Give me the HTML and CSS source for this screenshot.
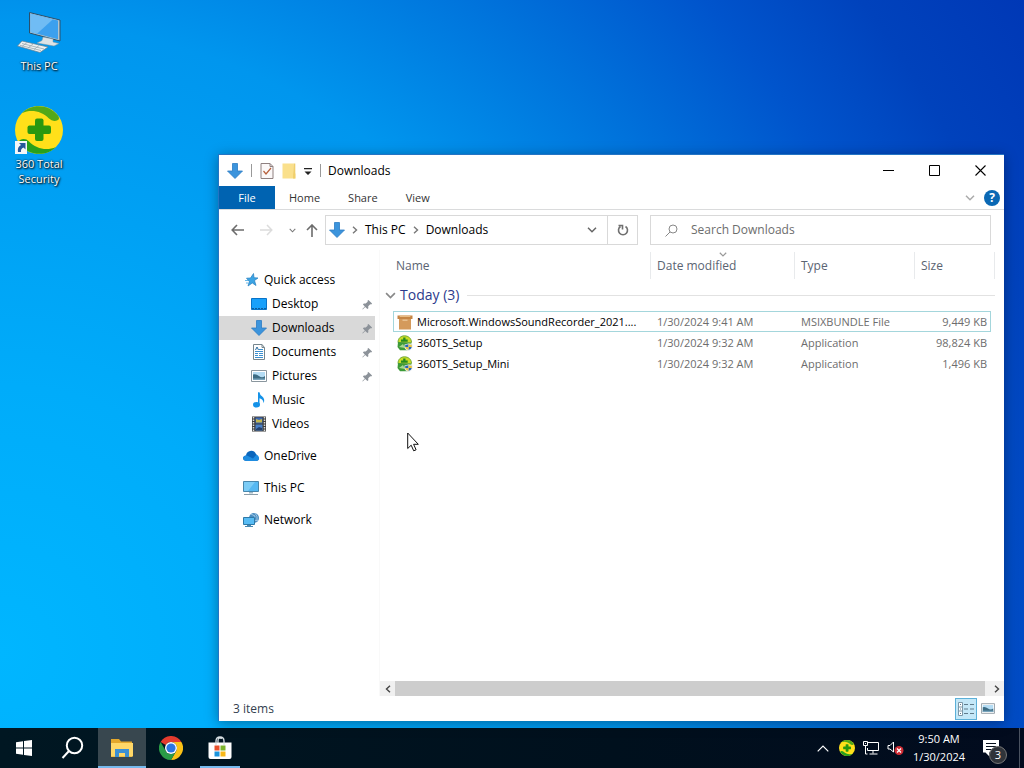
FILE: index.html
```html
<!DOCTYPE html>
<html lang="en">
<head>
    <meta charset="UTF-8">
    <meta name="viewport" content="width=device-width, initial-scale=1.0">
    <title>Downloads</title>
    <link rel="stylesheet" href="styles.css">
</head>
<body>
    <!-- Icons used more than once -->
    <svg class="icon-defs" width="0" height="0">
        <symbol id="icon-down" viewBox="0 0 16 16">
            <path d="M5.500.5h5v7.500h5L8 15.500.5 8h5z" fill="#3c94dc" stroke="#2b7cc4" stroke-width=".8"/>
        </symbol>
        <symbol id="icon-pin" viewBox="0 0 12 12">
            <path d="M7 1l4 4-1 1-1-.2-2.200 2.200.1 2-1 1-2.400-2.300L.8 11.400l-.4-.4 2.700-2.900L1 6l1-1h2L6.200 3 6 2z" fill="#8c9299"/>
        </symbol>
        <symbol id="icon-360" viewBox="0 0 48 48">
            <circle cx="24" cy="24" r="24" fill="#ffe01a"/>
            <path d="M7 7C17-3 34-2 43 9.500q2 3 0 4.500-5 2.500-9-1.500C27 5 16 3 7 7z" fill="#52a818"/>
            <path d="M41 41C31 51 14 50 5 38.500q-2-3 0-4.500 5-2.500 9 1.500C21 43 32 45 41 41z" fill="#28a01c"/>
            <rect x="20" y="12.500" width="8.500" height="22.500" rx="2" fill="#28980f"/>
            <rect x="12.500" y="19.500" width="23.500" height="8.500" rx="2" fill="#28980f"/>
        </symbol>
        <symbol id="icon-setup" viewBox="0 0 16 16">
            <path d="M1 7.500C1 3 4 .8 7.500.8S14.500 3 14.500 7.500z" fill="#c8dc28" stroke="#5a9c28" stroke-width=".8"/>
            <path d="M6.200 2.500h2.300v2h2.200v2.300H4V4.500h2.200z" fill="#258a20"/>
            <path d="M1 7l5 .5 8.500 1v4.500l-4 2.200H3L.5 12z" fill="#3c9a38"/>
            <path d="M2 12l4-3 2 4z" fill="#a8d890"/>
            <path d="M11.500 8.500l4 1v2.500q0 2.500-4 4-4-1.500-4-4V9.500z" fill="#e8ecef"/>
            <path d="M11.500 9.300V12H8.200V10zM11.500 12h3.300q-.2 2-3.300 3z" fill="#2864b4"/>
            <path d="M11.500 9.300V12h3.300V10zM11.500 12H8.200q.2 2 3.300 3z" fill="#e8c43c"/>
        </symbol>
        <symbol id="icon-chevron-down" viewBox="0 0 10 6">
            <path d="M1 .8l4 4 4-4" fill="none" stroke="currentColor" stroke-width="1.500"/>
        </symbol>
        <symbol id="icon-chevron-right" viewBox="0 0 6 8">
            <path d="M1 .8L4.500 4 1 7.200" fill="none" stroke="currentColor" stroke-width="1.400"/>
        </symbol>
        <symbol id="icon-picture" viewBox="0 0 16 12">
            <path d="M.5.5h15v11H.5z" fill="#fff" stroke="#8a969e"/>
            <path d="M2 2h12v8H2z" fill="#b4dcf4"/>
            <path d="M2 4.500q3-1 6 1.500t6 0v4H2z" fill="#3c6c84"/>
            <path d="M2 8.500h12V10H2z" fill="#78a4bc"/>
        </symbol>
    </svg>

    <main class="desktop">
        <div class="shortcuts">
            <button class="shortcut">
                <svg width="48" height="48" viewBox="0 0 48 48">
                    <path d="M14.500 4.500L45 12v21L14.500 25z" fill="#b4c4cc" stroke="#28506e"/>
                    <path d="M15.500 5.800L43 12.500v18.800L15.500 24z" fill="#3ca0ee"/>
                    <path d="M15.500 5.800L38 11.300 22 25.700l-6.500-1.700z" fill="#70bcf4"/>
                    <path d="M28 29l10 2v3l6 1.500-5 2.500-17-3 5-2.500z" fill="#dde3e6" stroke="#7c929e" stroke-width=".5"/>
                    <path d="M7 33l26 6-8 5.500L2.500 38z" fill="#eef1f2" stroke="#64808f" stroke-width=".7"/>
                    <path d="M7 35.500l22 5.500M5 37.300l21 5.200M12 34.500l-5 4M18 36l-5 4M24 37.500l-5 4" stroke="#9aa8b0" fill="none" stroke-width=".8"/>
                </svg>
                <span>This PC</span>
            </button>
            <button class="shortcut">
                <svg width="48" height="48" viewBox="0 0 48 48">
                    <use href="#icon-360"/>
                    <path d="M0 35h12v13H0z" fill="#f4f6f8"/>
                    <path d="M3 46q-1-5 3-7L4 37h6.500v6.500L8.500 41.500q-3 1-2.500 4.500z" fill="#26589c"/>
                </svg>
                <span>360 Total Security</span>
            </button>
        </div>

        <section class="window">
            <header class="titlebar">
                <div class="quick-tools">
                    <svg width="16" height="16"><use href="#icon-down"/></svg>
                    <span class="tool-divider"></span>
                    <button>
                        <svg width="14" height="16" viewBox="0 0 14 16">
                            <path d="M1 .5h9l3 3v12H1z" fill="#fbf8f8" stroke="#8e8080"/>
                            <path d="M10 .5v3h3" fill="none" stroke="#8e8080"/>
                            <path d="M3.500 8l2.500 3 5-6" fill="none" stroke="#b8603c" stroke-width="1.200"/>
                        </svg>
                    </button>
                    <button>
                        <svg width="14" height="16" viewBox="0 0 14 16">
                            <path d="M.5.5h11v10h2v5H.5z" fill="#fae08c"/>
                            <path d="M11.500.5h1.800v15H11z" fill="#f0cf6c"/>
                        </svg>
                    </button>
                    <button>
                        <svg width="8" height="8" viewBox="0 0 8 8"><path d="M0 1h8v1.300H0zM.5 4.500h7L4 8z" fill="#222"/></svg>
                    </button>
                    <span class="tool-divider"></span>
                </div>
                <h1>Downloads</h1>
                <div class="window-controls">
                    <button aria-label="Minimize"><svg width="11" height="11" viewBox="0 0 11 11"><path d="M0 5.500h11" stroke="#000"/></svg></button>
                    <button aria-label="Maximize"><svg width="11" height="11" viewBox="0 0 11 11"><path d="M.5.5h10v10H.5z" fill="none" stroke="#000"/></svg></button>
                    <button aria-label="Close"><svg width="11" height="11" viewBox="0 0 11 11"><path d="M.5.5l10 10M10.500.5l-10 10" stroke="#000" stroke-width="1.100"/></svg></button>
                </div>
            </header>

            <div class="ribbon">
                <button class="tab file-tab">File</button>
                <button class="tab">Home</button>
                <button class="tab">Share</button>
                <button class="tab">View</button>
                <div class="ribbon-right">
                    <button class="expand" aria-label="Expand the Ribbon"><svg width="10" height="6"><use href="#icon-chevron-down"/></svg></button>
                    <button class="help" aria-label="Help">?</button>
                </div>
            </div>

            <div class="address-row">
                <div class="nav-buttons">
                    <button aria-label="Back"><svg width="13" height="12" viewBox="0 0 13 12"><path d="M6 1L1.200 6 6 11M1.200 6H13" fill="none" stroke="#6c6c6c" stroke-width="1.600"/></svg></button>
                    <button aria-label="Forward"><svg width="13" height="12" viewBox="0 0 13 12"><path d="M7 1l4.800 5L7 11M11.800 6H0" fill="none" stroke="#dcdcdc" stroke-width="1.500"/></svg></button>
                    <button class="recent" aria-label="Recent locations"><svg width="7" height="5"><use href="#icon-chevron-down"/></svg></button>
                    <button class="up" aria-label="Up"><svg width="12" height="13" viewBox="0 0 12 13"><path d="M1 6l5-5 5 5M6 1v12" fill="none" stroke="#6c6c6c" stroke-width="1.600"/></svg></button>
                </div>
                <div class="address-bar">
                    <nav class="crumbs">
                        <svg width="16" height="18"><use href="#icon-down"/></svg>
                        <svg class="sep" width="6" height="8"><use href="#icon-chevron-right"/></svg>
                        <a href="#">This PC</a>
                        <svg class="sep" width="6" height="8"><use href="#icon-chevron-right"/></svg>
                        <a href="#">Downloads</a>
                    </nav>
                    <button class="history" aria-label="Previous locations"><svg width="10" height="6"><use href="#icon-chevron-down"/></svg></button>
                    <button class="refresh" aria-label="Refresh">
                        <svg width="12" height="12" viewBox="0 0 12 12"><path d="M8.500 2.500A4.500 4.500 0 1 1 3.500 2.500M1.500 1.500H5.500V5.500" fill="none" stroke="#707070" stroke-width="1.600"/></svg>
                    </button>
                </div>
                <label class="search">
                    <svg width="13" height="13" viewBox="0 0 13 13"><circle cx="8" cy="5" r="4" fill="none" stroke="#888"/><path d="M5 8L.5 12.500" stroke="#888"/></svg>
                    <input type="text" placeholder="Search Downloads" aria-label="Search Downloads">
                </label>
            </div>

            <div class="explorer-body">
                <nav class="sidebar">
                    <a href="#" class="root">
                        <svg width="16" height="16" viewBox="0 0 16 16"><path d="M10.500 1.500l.5 4.200 4 .3-3.500 2.500 1.500 5L9.300 11 5 14l1.300-4.500L3.500 6.200l4-.2z" fill="#3ca4e4" stroke="#2680c0" stroke-width=".7"/><path d="M2 8.500h3M3 11h2" stroke="#68b8e8"/></svg>
                        Quick access
                    </a>
                    <a href="#">
                        <svg width="16" height="16" viewBox="0 0 16 16"><path d="M.5 2.500h15v11H.5z" fill="#18a0fa" stroke="#0873c8"/><path d="M1 12.500h14" stroke="#0a5c9c" stroke-dasharray="2 1"/></svg>
                        Desktop
                        <svg class="pin" width="11" height="11"><use href="#icon-pin"/></svg>
                    </a>
                    <a href="#" class="selected">
                        <svg width="16" height="16"><use href="#icon-down"/></svg>
                        Downloads
                        <svg class="pin" width="11" height="11"><use href="#icon-pin"/></svg>
                    </a>
                    <a href="#">
                        <svg width="16" height="16" viewBox="0 0 16 16"><path d="M2.500.5h8.500l2.500 3v12h-11z" fill="#fff" stroke="#76868e"/><path d="M11 .5v3h2.500" fill="none" stroke="#76868e"/><path d="M4 7.500h8M4 9.500h3M8 9.500h4M4 11.500h3M4 13.500h8M8 5.500h4M8 11.500h4" stroke="#3c90d0"/><path d="M4.500 6l1.500-3 1.500 3" stroke="#2c6ca0" fill="none"/></svg>
                        Documents
                        <svg class="pin" width="11" height="11"><use href="#icon-pin"/></svg>
                    </a>
                    <a href="#">
                        <svg width="16" height="12"><use href="#icon-picture"/></svg>
                        Pictures
                        <svg class="pin" width="11" height="11"><use href="#icon-pin"/></svg>
                    </a>
                    <a href="#">
                        <svg width="16" height="16" viewBox="0 0 16 16"><ellipse cx="5.500" cy="12.800" rx="3.500" ry="2.700" fill="#1492e8"/><path d="M7 .3h1.500q.3 2.500 2.500 4 3.500 3 1.500 7 0-4-4-5v6.500H7z" fill="#1492e8"/></svg>
                        Music
                    </a>
                    <a href="#">
                        <svg width="16" height="16" viewBox="0 0 16 16"><path d="M1 .5h14v15H1z" fill="#3c3c3c"/><path d="M2.500 1v14M13.500 1v14" stroke="#dcdcdc" stroke-width="1.500" stroke-dasharray="1.500 1"/><path d="M4.500 1.500h7v6h-7z" fill="#3c68b4"/><path d="M4.500 8.500h7v6h-7z" fill="#4a80c8"/><path d="M5 3l3 1 3-1v3.500H5z" fill="#c4b850"/><path d="M5 13l3-2 3 1v2H5z" fill="#24406c"/></svg>
                        Videos
                    </a>
                    <a href="#" class="root spaced">
                        <svg width="16" height="16" viewBox="0 0 16 16"><path d="M3 8Q3 4 7 3t6 3l3 4q0 3-3 3H4q-4 0-4-3 0-2 3-2.500z" fill="#0b66bc"/><path d="M0 10q1-3 4-2.500l6 3 3.500-4Q16 7.500 16 10t-3 3H4q-3.500 0-4-3z" fill="#1f8ce0"/></svg>
                        OneDrive
                    </a>
                    <a href="#" class="root spaced">
                        <svg width="16" height="16" viewBox="0 0 16 16"><path d="M.5 1.500h15v10H.5z" fill="#56b8f2" stroke="#4886ac"/><path d="M1 2h11L5 11H1z" fill="#7cccf6"/><path d="M6 12h4v1.500H6z" fill="#a0b8c6"/><path d="M1 14.500h14" stroke="#8b9da8"/></svg>
                        This PC
                    </a>
                    <a href="#" class="root spaced">
                        <svg width="16" height="16" viewBox="0 0 16 16"><circle cx="11" cy="6" r="5" fill="#4a8cc0"/><path d="M8 2l4 2-1 4 4 1M12 1q3 3 2 8" stroke="#a0c8e4" fill="none"/><path d="M.5 5.500h11v7H.5z" fill="#58bcf4" stroke="#2d79a8"/><path d="M4 13h4v1h2v1H2v-1h2z" fill="#4888b0"/></svg>
                        Network
                    </a>
                </nav>

                <div class="files">
                    <div class="file-list">
                        <table>
                            <colgroup>
                                <col class="col-gutter">
                                <col>
                                <col class="col-date">
                                <col class="col-type">
                                <col class="col-size">
                                <col class="col-end">
                            </colgroup>
                            <thead>
                                <tr>
                                    <td></td>
                                    <th>Name</th>
                                    <th><svg class="sort" width="8" height="5"><use href="#icon-chevron-down"/></svg>Date modified</th>
                                    <th>Type</th>
                                    <th>Size</th>
                                    <td class="end"></td>
                                </tr>
                            </thead>
                            <tbody>
                                <tr class="group">
                                    <td colspan="6">
                                        <div class="group-title">
                                            <svg width="11" height="7"><use href="#icon-chevron-down"/></svg>
                                            <span>Today (3)</span>
                                        </div>
                                    </td>
                                </tr>
                                <tr class="focused">
                                    <td></td>
                                    <td class="name">
                                        <div class="file-name">
                                            <svg width="16" height="16" viewBox="0 0 16 16"><path d="M2 4h12v11.500H2z" fill="#d49a5c"/><path d="M.5 1.500h15V5H.5z" fill="#c58544"/><path d="M2 1.500h12l-1 1.500H3z" fill="#e8bc84"/><path d="M5.500 5.500h5v1.500h-5z" fill="#e8c090"/></svg>
                                            Microsoft.WindowsSoundRecorder_2021....
                                        </div>
                                    </td>
                                    <td>1/30/2024 9:41 AM</td>
                                    <td>MSIXBUNDLE File</td>
                                    <td class="size">9,449 KB</td>
                                    <td></td>
                                </tr>
                                <tr>
                                    <td></td>
                                    <td class="name">
                                        <div class="file-name">
                                            <svg width="16" height="16"><use href="#icon-setup"/></svg>
                                            360TS_Setup
                                        </div>
                                    </td>
                                    <td>1/30/2024 9:32 AM</td>
                                    <td>Application</td>
                                    <td class="size">98,824 KB</td>
                                    <td></td>
                                </tr>
                                <tr>
                                    <td></td>
                                    <td class="name">
                                        <div class="file-name">
                                            <svg width="16" height="16"><use href="#icon-setup"/></svg>
                                            360TS_Setup_Mini
                                        </div>
                                    </td>
                                    <td>1/30/2024 9:32 AM</td>
                                    <td>Application</td>
                                    <td class="size">1,496 KB</td>
                                    <td></td>
                                </tr>
                            </tbody>
                        </table>
                    </div>
                    <div class="scrollbar">
                        <button aria-label="Scroll left"><svg class="flip" width="6" height="8"><use href="#icon-chevron-right"/></svg></button>
                        <div class="thumb"></div>
                        <button aria-label="Scroll right"><svg width="6" height="8"><use href="#icon-chevron-right"/></svg></button>
                    </div>
                </div>
            </div>

            <footer class="statusbar">
                <span>3 items</span>
                <div class="views">
                    <button class="active" aria-label="Details">
                        <svg width="16" height="14" viewBox="0 0 16 14"><path d="M.5.5h4v13h-4zM.5 5h4M.5 9h4" fill="#fff" stroke="#7c98a8"/><path d="M6 2.500h4M12 2.500h4M6 7h4M12 7h4M6 11.500h4M12 11.500h4M2 2.500h1M2 7h1M2 11.500h1" stroke="#607c8c"/></svg>
                    </button>
                    <button aria-label="Large icons"><svg width="14" height="11"><use href="#icon-picture"/></svg></button>
                </div>
            </footer>
        </section>

        <svg class="cursor" width="12" height="20" viewBox="0 0 12 20"><path d="M.7 1v15.500l3.500-3.300 2.500 5.600 2.400-1-2.500-5.500h4.700z" fill="#fff" stroke="#111"/></svg>
    </main>

    <footer class="taskbar">
        <div class="apps">
            <button aria-label="Start">
                <svg width="16" height="16" viewBox="0 0 16 16"><path d="M0 2.200L7 1.200v6.300H0zM8 1l8-1v7.500H8zM0 8.500h7v6.300l-7-1zM8 8.500h8V16l-8-1z" fill="#fff"/></svg>
            </button>
            <button aria-label="Search">
                <svg width="24" height="24" viewBox="0 0 24 24"><circle cx="13.500" cy="9.500" r="7.700" fill="none" stroke="#fff" stroke-width="2"/><path d="M8 15l-6.500 7" stroke="#fff" stroke-width="2"/></svg>
            </button>
            <button class="open current" aria-label="File Explorer">
                <svg width="22" height="20" viewBox="0 0 22 20"><path d="M0 1h8l2 2.500h11V19H0z" fill="#e4a82c"/><path d="M0 5h22v13.500H0z" fill="#ffd868"/><path d="M4 19v-8h14v8h-4v-4H8v4z" fill="#3c90d4"/></svg>
            </button>
            <button aria-label="Google Chrome">
                <svg width="24" height="24" viewBox="0 0 24 24"><path d="M1.600 6A12 12 0 0 1 22.400 6H12a6 6 0 0 0-5.200 3z" fill="#e33b2e"/><path d="M22.400 6A12 12 0 0 1 12 24l5.200-9a6 6 0 0 0-5.200-9z" fill="#fbc116"/><path d="M12 24A12 12 0 0 1 1.600 6l5.200 9a6 6 0 0 0 10.400 0z" fill="#2a9c47"/><circle cx="12" cy="12" r="6" fill="#fff"/><circle cx="12" cy="12" r="4.600" fill="#2b75e2"/></svg>
            </button>
            <button class="open" aria-label="Microsoft Store">
                <svg width="24" height="24" viewBox="0 0 24 24"><path d="M.5 6.500h23V21q0 2-2 2h-19q-2 0-2-2z" fill="#fff"/><path d="M8 9V5q0-4 4-4t4 4v4M10 7V4.500Q10 1 14 2.500" fill="none" stroke="#d8e0e4" stroke-width="1.300"/><path d="M6.500 9.500h5v5h-5z" fill="#e8502c"/><path d="M12.500 9.500h5v5h-5z" fill="#7cb42c"/><path d="M6.500 15.500h5v5h-5z" fill="#1c94dc"/><path d="M12.500 15.500h5v5h-5z" fill="#f8b818"/></svg>
            </button>
        </div>
        <div class="tray">
            <button aria-label="Show hidden icons"><svg width="12" height="7" viewBox="0 0 12 7"><path d="M.7 6.300L6 1l5.300 5.300" fill="none" stroke="#fff" stroke-width="1.200"/></svg></button>
            <button aria-label="360 Total Security"><svg width="16" height="16"><use href="#icon-360"/></svg></button>
            <button aria-label="Network">
                <svg width="16" height="14" viewBox="0 0 16 14"><path d="M5 1.500h10.500v8H4.500V7M10 9.500v3M6.500 13h8M2.500 5v8h2" fill="none" stroke="#fff"/><path d="M.5.5h4v4h-4zM2 2.500h1" fill="none" stroke="#fff"/></svg>
            </button>
            <button aria-label="Volume">
                <svg width="17" height="14" viewBox="0 0 17 14"><path d="M1 4.500h2L6.500 1v10L3 8H1z" fill="none" stroke="#fff"/><circle cx="12" cy="9.500" r="4.500" fill="#d02c34"/><path d="M10 7.500l4 4M14 7.500l-4 4" stroke="#fff" stroke-width="1.200"/></svg>
            </button>
            <button class="clock"><span>9:50 AM</span><span>1/30/2024</span></button>
            <button class="notifications" aria-label="Notifications">
                <svg width="16" height="16" viewBox="0 0 16 16"><path d="M0 0h16v12.500H6V16l-3.500-3.500H0z" fill="#fff"/><path d="M3 3.500h10M3 6.500h10M3 9.500h7" stroke="#07101d"/></svg>
                <span class="badge">3</span>
            </button>
            <button class="show-desktop" aria-label="Show desktop"></button>
        </div>
    </footer>
</body>
</html>
```

FILE: styles.css
```css
* {
    box-sizing: border-box;
}

body {
    margin: 0;
    height: 100vh;
    display: flex;
    flex-direction: column;
    overflow: hidden;
    font-family: "Open Sans", "Noto Sans", sans-serif;
    font-size: 12px;
    line-height: 16px;
    color: #000;
    background: radial-gradient(circle at 0 85%, #00b6ff 0%, #00acfa 22%, #0096ee 52%, #0074dc 66%, #0054cc 79%, #0042bc 89%, #0038b6 100%);
}

svg {
    display: block;
    flex-shrink: 0;
}

button {
    margin: 0;
    padding: 0;
    border: none;
    background: transparent;
    color: inherit;
    font: inherit;
}

a {
    color: inherit;
    text-decoration: none;
}

.icon-defs {
    position: absolute;
}

.desktop {
    flex: 1;
    position: relative;
    min-height: 0;
}

/* Desktop shortcuts */
.shortcuts {
    width: 78px;
}

.shortcut {
    display: flex;
    flex-direction: column;
    align-items: center;
    gap: 2px;
    width: 100%;
    height: 98px;
    padding: 8px 12px 0;
    font-size: 11px;
    line-height: 15px;
    color: #fff;
    text-shadow: 1px 1px 2px #000, 0 0 2px #000;
}

/* Explorer window */
.window {
    position: absolute;
    left: 218px;
    top: 154px;
    right: 20px;
    bottom: 7px;
    display: flex;
    flex-direction: column;
    background: #fff;
    border: 1px solid #2474c4;
    border-right: none;
    border-bottom: none;
    box-shadow: 0 2px 12px rgba(0, 0, 0, 0.35);
}

.titlebar {
    display: flex;
    align-items: center;
    height: 31px;
    padding-left: 8px;
}

.titlebar h1 {
    margin: 0;
    font-size: 12px;
    font-weight: normal;
}

.quick-tools {
    display: flex;
    align-items: center;
    gap: 8px;
    margin-right: 7px;
}

.tool-divider {
    width: 1px;
    height: 13px;
    background: #999;
}

.window-controls {
    display: flex;
    align-self: stretch;
    margin-left: auto;
    padding-right: 1px;
}

.window-controls button {
    display: flex;
    align-items: center;
    justify-content: center;
    width: 46px;
}

.ribbon {
    display: flex;
    height: 24px;
    border-bottom: 1px solid #dadbdc;
    color: #333;
}

.tab {
    padding: 0 14px;
    font-size: 11px;
}

.file-tab {
    width: 56px;
    background: #0063b1;
    color: #fff;
}

.ribbon-right {
    display: flex;
    align-items: center;
    gap: 9px;
    margin-left: auto;
    padding-right: 4px;
}

.expand {
    color: #aaa;
}

.help {
    width: 16px;
    height: 16px;
    border-radius: 8px;
    background: #0a68b4;
    color: #fff;
    font-weight: bold;
}

/* Navigation and search */
.address-row {
    display: flex;
    gap: 12px;
    padding: 5px 13px 5px 0;
}

.nav-buttons {
    display: flex;
    align-items: center;
    width: 94px;
    padding-left: 12px;
    gap: 16px;
    color: #777;
}

.nav-buttons .up {
    margin-left: -6px;
}

.address-bar {
    display: flex;
    flex: 1;
    height: 30px;
    border: 1px solid #d9d9d9;
}

.crumbs {
    display: flex;
    align-items: center;
    flex: 1;
    gap: 7px;
    padding-left: 3px;
}

.sep {
    color: #777;
}

.history {
    width: 30px;
    display: flex;
    align-items: center;
    justify-content: center;
    color: #666;
}

.refresh {
    width: 30px;
    display: flex;
    align-items: center;
    justify-content: center;
    border-left: 1px solid #d9d9d9;
}

.search {
    display: flex;
    align-items: center;
    flex: 1;
    height: 30px;
    gap: 13px;
    padding: 0 14px;
    border: 1px solid #d9d9d9;
}

.search input {
    flex: 1;
    min-width: 0;
    padding: 0;
    border: none;
    outline: none;
    background: transparent;
    font: inherit;
}

.search input::placeholder {
    color: #6d6d6d;
    opacity: 1;
}

.explorer-body {
    flex: 1;
    display: flex;
    min-height: 0;
}

.sidebar {
    width: 161px;
    padding: 18px 4px 0 0;
    border-right: 1px solid #f9f9f9;
}

.sidebar a {
    display: flex;
    align-items: center;
    gap: 5px;
    height: 24px;
    padding: 0 2px 0 32px;
}

.sidebar .root {
    padding-left: 24px;
}

.sidebar .spaced {
    margin-top: 8px;
}

.sidebar .selected {
    background: #d9d9d9;
}

.pin {
    margin-left: auto;
}

/* File list */
.files {
    flex: 1;
    display: flex;
    flex-direction: column;
    min-width: 0;
}

.file-list {
    flex: 1;
    padding: 2px 9px 0 5px;
}

table {
    width: 100%;
    table-layout: fixed;
    border-collapse: separate;
    border-spacing: 0;
}

.col-gutter {
    width: 8px;
}

.col-date {
    width: 144px;
}

.col-type {
    width: 120px;
}

.col-size {
    width: 76px;
}

.col-end {
    width: 4px;
}

td {
    height: 21px;
    padding: 0 6px;
    color: #6d6d6d;
    font-size: 11px;
    white-space: nowrap;
}

td:first-child,
td:last-child {
    padding: 0;
}

th {
    position: relative;
    height: 27px;
    padding: 0 6px;
    border-right: 1px solid #e8eaec;
    color: #5a6472;
    font-weight: normal;
    text-align: left;
}

th:nth-child(2) {
    padding-left: 3px;
}

th:nth-child(5) {
    border-right: none;
}

.end {
    border-right: 1px solid #e8eaec;
}

.sort {
    position: absolute;
    top: 0;
    left: 50%;
    margin-left: -4px;
    color: #999;
}

.group td {
    height: 32px;
}

.group-title {
    display: flex;
    align-items: center;
    gap: 4px;
    font-size: 14px;
    color: #888;
}

.group-title span {
    color: #2c3a8c;
}

.group-title::after {
    content: "";
    flex: 1;
    height: 1px;
    margin-left: 4px;
    background: #e2e2e2;
}

.name {
    padding: 0 4px;
    color: #000;
}

.file-name {
    display: flex;
    align-items: center;
    gap: 4px;
}

.size {
    padding: 0 4px;
    text-align: right;
}

.focused td:not(:first-child):not(:last-child) {
    border-top: 1px solid #a4d6dc;
    border-bottom: 1px solid #a4d6dc;
}

.focused .name {
    padding-left: 3px;
    border-left: 1px solid #a4d6dc;
}

.focused .size {
    padding-right: 3px;
    border-right: 1px solid #a4d6dc;
}

.scrollbar {
    display: flex;
    height: 15px;
    background: #f0f0f0;
    color: #444;
}

.scrollbar button {
    display: flex;
    align-items: center;
    justify-content: center;
    width: 15px;
}

.scrollbar .thumb {
    flex: 1;
    margin-right: 4px;
    background: #cdcdcd;
}

.flip {
    transform: scaleX(-1);
}

.statusbar {
    display: flex;
    align-items: center;
    justify-content: space-between;
    height: 25px;
    padding: 0 5px 0 14px;
    color: #333f50;
}

.views {
    display: flex;
}

.views button {
    display: flex;
    align-items: center;
    justify-content: center;
    width: 22px;
    height: 22px;
}

.views .active {
    border: 1px solid #5cb0d8;
    background: #c4e8f8;
}

.cursor {
    position: absolute;
    left: 407px;
    top: 432px;
}

/* Taskbar */
.taskbar {
    display: flex;
    justify-content: space-between;
    height: 40px;
    background: linear-gradient(90deg, #001722, #00101d 60%, #020b1e);
    color: #fff;
}

.apps {
    display: flex;
    gap: 1px;
}

.apps button {
    position: relative;
    display: flex;
    align-items: center;
    justify-content: center;
    width: 48px;
}

.apps .current {
    background: #38474f;
}

.apps .open::after {
    content: "";
    position: absolute;
    left: 4px;
    right: 4px;
    bottom: 0;
    height: 2px;
    background: #76b9ed;
}

.apps .current::after {
    left: 0;
    right: 0;
}

.tray {
    display: flex;
}

.tray button {
    display: flex;
    align-items: center;
    justify-content: center;
    width: 24px;
}

.tray .clock {
    flex-direction: column;
    gap: 2px;
    width: 64px;
    font-size: 11px;
}

.tray .notifications {
    position: relative;
    width: 40px;
    margin-right: 8px;
}

.badge {
    position: absolute;
    left: 18px;
    top: 18px;
    width: 18px;
    height: 18px;
    border: 1px solid #777;
    border-radius: 9px;
    background: #30343a;
    font-size: 11px;
    line-height: 16px;
    text-align: center;
}

.tray .show-desktop {
    width: 5px;
    border-left: 1px solid #4a5260;
}
```
